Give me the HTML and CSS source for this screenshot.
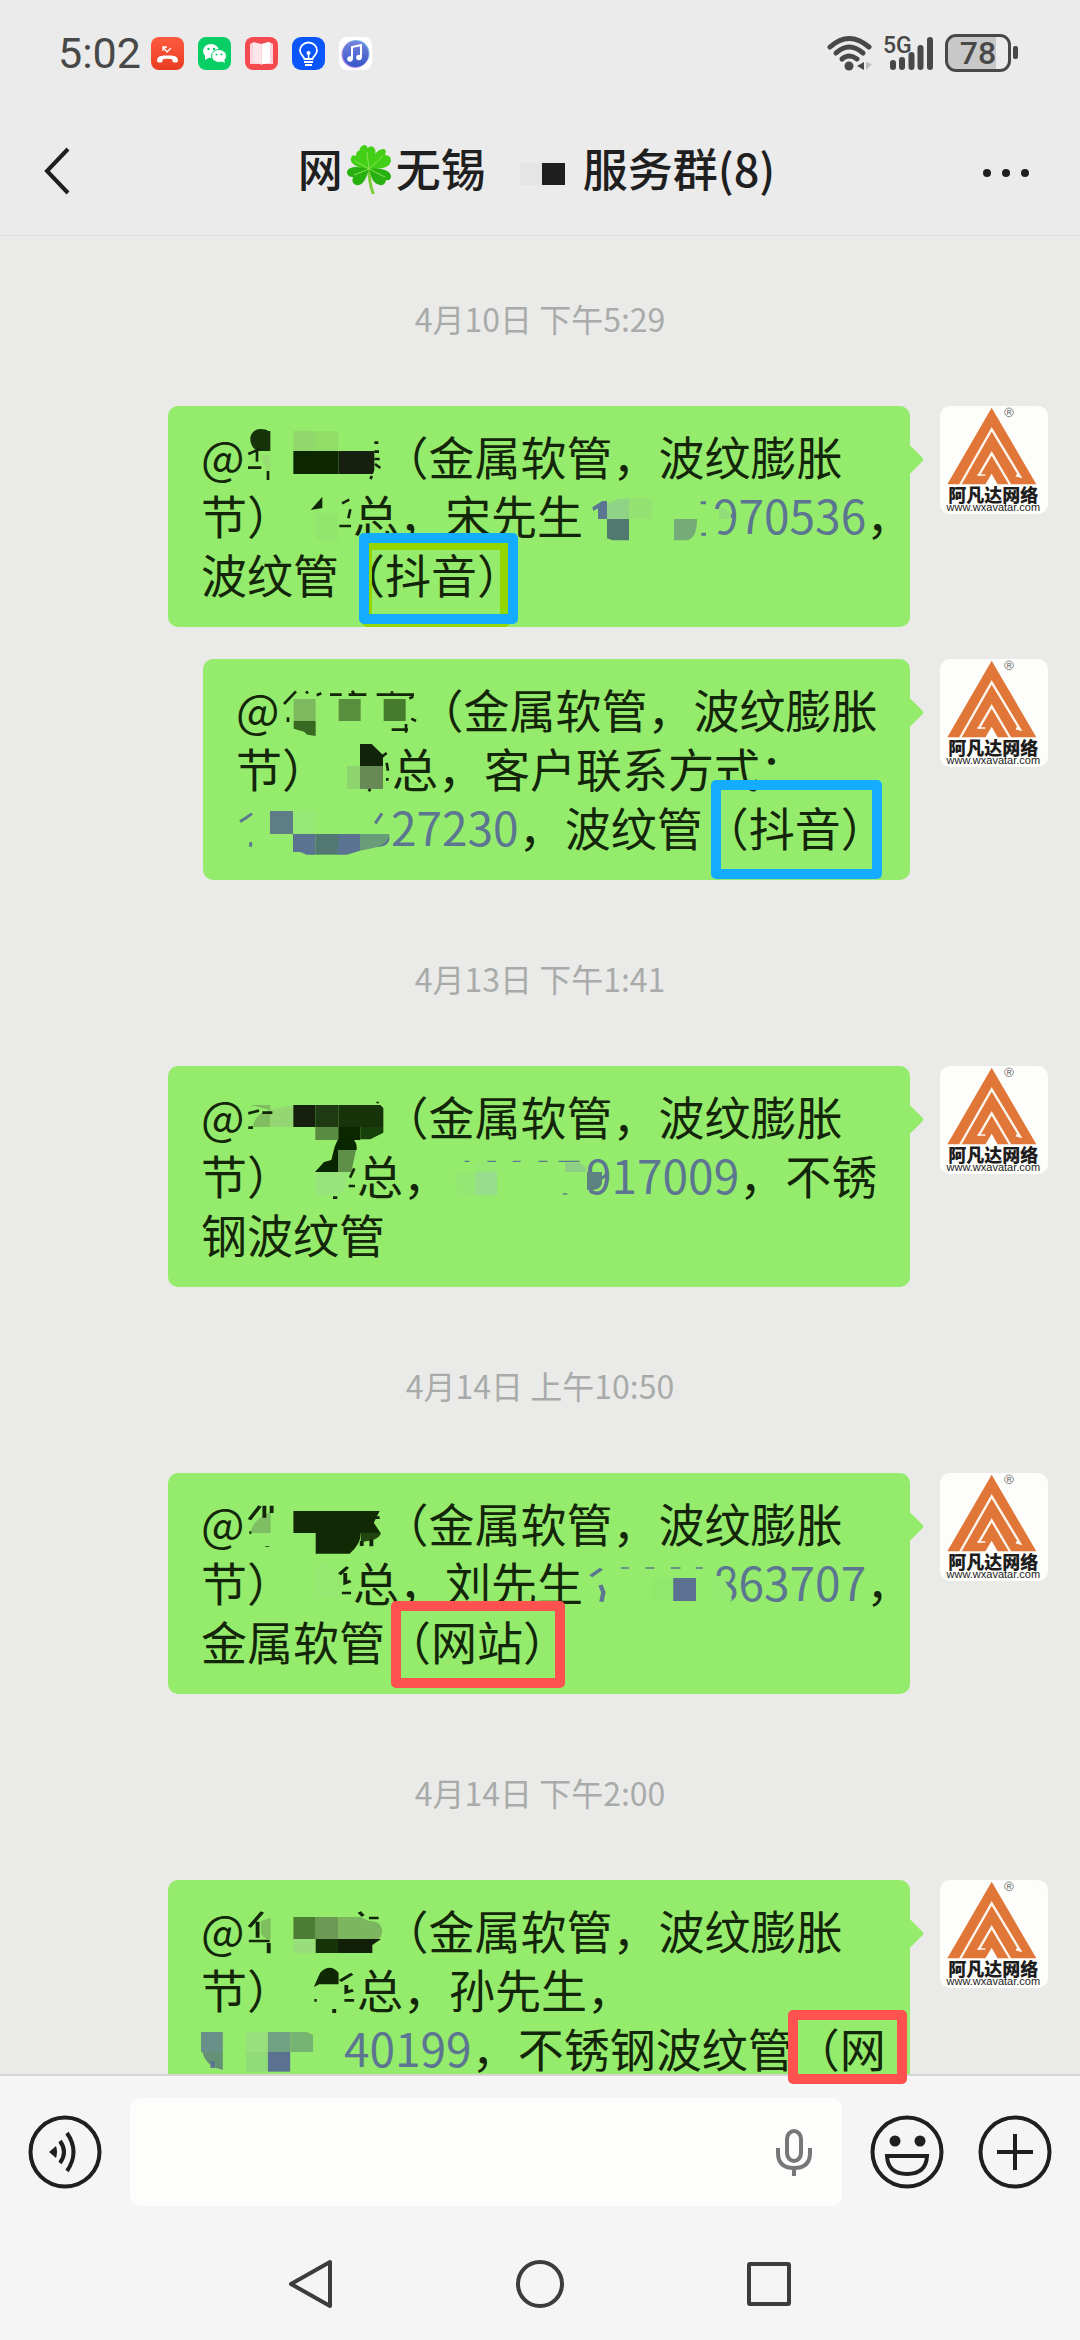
FILE: index.html
```html
<!DOCTYPE html>
<html lang="zh-CN">
<head>
    <meta charset="UTF-8">
    <meta name="viewport" content="width=device-width, initial-scale=1.0">
    <title>服务群(8)</title>
    <link rel="stylesheet" href="styles.css">
</head>
<body>
    <svg class="defs" aria-hidden="true">
        <symbol id="logo" viewBox="0 0 324 324">
            <rect width="324" height="324" fill="#fdfefb"/>
            <path d="M155 5 L289 235 H22 Z" fill="#e07738"/>
            <path d="M60 237 L155 70 L240 211 L228 208" fill="none" stroke="#fdf6ee" stroke-width="7"/>
            <path d="M116 209 L155 142 L211 237" fill="none" stroke="#fdf6ee" stroke-width="7"/>
            <path d="M112 207 H127 M119 207 L136 207" fill="none" stroke="#fdf6ee" stroke-width="5"/>
            <path d="M135 237 L155 203 L174 237 Z" fill="#fdfefb"/>
            <circle cx="207" cy="19" r="13" fill="none" stroke="#555" stroke-width="2"/>
            <text x="200" y="27" class="logo-r">R</text>
            <text x="160" y="288" class="logo-name">阿凡达网络</text>
            <text x="160" y="315" class="logo-url">www.wxavatar.com</text>
        </symbol>
    </svg>

    <div class="status">
        <span class="clock">5:02</span>
        <div class="apps">
            <svg class="app" viewBox="0 0 33 33">
                <defs><linearGradient id="red" x2="0" y2="1"><stop stop-color="#ff5a40"/><stop offset="1" stop-color="#e93d21"/></linearGradient></defs>
                <rect width="33" height="33" rx="8" fill="url(#red)"/>
                <path d="M6 24 C6 18 12 18.500 16.500 18.500 S27 18 27 24 C27 26 22 26 21.500 24.500 V22.500 C19 21.500 14 21.500 11.500 22.500 V24.500 C11 26 6 26 6 24 Z" fill="#fff"/>
                <path d="M12 14 V10 H16 M12 10 L16 15 L20 11" fill="none" stroke="#fff" stroke-width="1.300"/>
            </svg>
            <svg class="app" viewBox="0 0 33 33">
                <rect width="33" height="33" rx="8" fill="#07cf65"/>
                <ellipse cx="13" cy="14" rx="8" ry="7" fill="#fff"/>
                <path d="M7 18 L7 23 L12 20 Z" fill="#fff"/>
                <ellipse cx="21" cy="19" rx="7.500" ry="6.500" fill="#fff" stroke="#07cf65"/>
                <path d="M23 24 L27 26 L26 22 Z" fill="#fff"/>
                <circle cx="10.500" cy="12" r="1.200" fill="#07cf65"/><circle cx="16" cy="12" r="1.200" fill="#07cf65"/>
                <circle cx="18.500" cy="17.500" r="1" fill="#07cf65"/><circle cx="23.500" cy="17.500" r="1" fill="#07cf65"/>
            </svg>
            <svg class="app" viewBox="0 0 33 33">
                <rect width="33" height="33" rx="8" fill="#f4494f"/>
                <path d="M5 7 L9 5 L16 7 L24 5 L28 7 V27 H18 L16.500 28 L15 27 H5 Z" fill="#fbd3dc"/>
                <path d="M17 7 L24 5 L25 6 V26 L17 27 Z" fill="#fff"/>
                <path d="M8 6 L16 7 V27 L8 25 Z" fill="#fde6ea"/>
            </svg>
            <svg class="app" viewBox="0 0 33 33">
                <rect width="33" height="33" rx="9" fill="#0a56fa"/>
                <path d="M12.500 22 C12 19 8 18 8 13.500 A8.500 8 0 0 1 25 13.500 C25 18 21 19 20.500 22 Z" fill="none" stroke="#fff" stroke-width="1.800"/>
                <path d="M12 25 H21 M13 28 H20" stroke="#fff" stroke-width="2"/>
                <path d="M16.500 22 V17" stroke="#fff" stroke-width="1.500"/><circle cx="16.500" cy="16" r="2" fill="#fff"/>
            </svg>
            <svg class="app" viewBox="0 0 33 33">
                <defs><linearGradient id="tune" x2="0" y2="1"><stop stop-color="#7583dc"/><stop offset="1" stop-color="#3557c9"/></linearGradient></defs>
                <rect width="33" height="33" rx="8" fill="#fff"/>
                <circle cx="17" cy="16.500" r="13.500" fill="#6bb7ef"/>
                <circle cx="16" cy="17.500" r="13.500" fill="#c58de8"/>
                <circle cx="16.500" cy="17" r="13" fill="url(#tune)"/>
                <path d="M13 22 V10 L22 8 V20" fill="none" stroke="#fff" stroke-width="2"/>
                <circle cx="11" cy="22" r="2.800" fill="#fff"/><circle cx="20" cy="20.500" r="2.800" fill="#fff"/>
            </svg>
        </div>
        <div class="signals">
            <svg class="wifi" width="46" height="36" viewBox="0 0 46 36">
                <g fill="none" stroke="#484848" stroke-width="5" stroke-linecap="round">
                    <path d="M3 12 Q22 -5 42 12"/><path d="M9 18 Q22 6 36 18"/><path d="M15 24 Q22 18 30 24"/>
                </g>
                <circle cx="22" cy="31" r="4.500" fill="#484848"/>
                <path d="M37 27 V35 L30 31 Z" fill="#484848"/><path d="M39 27 V35 L45 29 Z" fill="#bbb"/>
            </svg>
            <svg class="cell" width="52" height="36" viewBox="0 0 52 36">
                <text x="0" y="18" class="net">5G</text>
                <path d="M10 28 V32 M19 25 V32 M28.500 20 V32 M37.500 13 V32 M47 5 V32" stroke="#484848" stroke-width="6" stroke-linecap="round"/>
            </svg>
            <div class="battery"><span>78</span></div>
        </div>
    </div>

    <header class="topbar">
        <button class="back" aria-label="返回">
            <svg width="28" height="50" viewBox="0 0 28 50"><path d="M25 3 L4 25 L25 47" fill="none" stroke="#1f1f1f" stroke-width="4"/></svg>
        </button>
        <h1>网<svg class="clover" width="45" height="50" viewBox="0 0 45 50">
                <path d="M22 25 Q22 38 26 49" fill="none" stroke="#7ccc3a" stroke-width="3" stroke-linecap="round"/>
                <g fill="#43cf15">
                    <path d="M22 25 C10 14 10 3 17 1 Q20 1 20.500 4 Q25 0 28 5 C30 11 25 20 22 25Z"/>
                    <path d="M22 25 C24 13 31 4 37 5 Q40 6 38 11 Q44 11 44 17 C42 25 32 25 22 25Z"/>
                    <path d="M22 25 C13 25 2 20 4 14 Q5 10 9 12 Q9 6 14 7 C19 9 21 16 22 25Z"/>
                </g>
                <g fill="#27b010">
                    <path d="M22 25 C32 23 45 26 44 33 Q43 37 39 36 Q38 42 33 41 C26 40 24 33 22 25Z"/>
                    <path d="M22 25 C12 22 1 22 0 28 Q0 33 6 33 Q4 39 9 41 C16 43 20 33 22 25Z"/>
                </g>
                <path d="M22 25 L20 8 M22 25 L36 12 M22 25 L8 17 M22 25 L38 33 M22 25 L7 31" stroke="#8ce255" stroke-width="1"/>
            </svg>无锡<svg class="hidden-name" width="97" height="24" viewBox="0 0 97 24"><path d="M34 0 H56 V22 H34Z" fill="#e5e5e5"/><path d="M56 0 H79 V22 H56Z" fill="#1f1f1f"/></svg>服务群(8)</h1>
        <button class="more" aria-label="更多">
            <svg width="48" height="16" viewBox="0 0 48 16"><g fill="#1f1f1f"><circle cx="5" cy="10" r="4"/><circle cx="24" cy="10" r="4"/><circle cx="43" cy="10" r="4"/></g></svg>
        </button>
    </header>

    <main class="chat">
        <time class="when">4月10日 下午5:29</time>
        <div class="row">
            <div class="bubble">
                @<svg class="mosaic" width="138" height="59" viewBox="254 108 414 177">
                    <path d="M330 123 V183 H300 C282 183 270 165 270 147 C270 130 284 117 300 117 Q318 117 324 123 Z" fill="#17330a"/>
                    <path d="M300 195 H330 V240 H318 Z" fill="#97dd72"/>
                    <path d="M264 192 L300 176 M290 182 V215 M263 233 H303 M323 243 V270" class="ink"/>
                    <path d="M399 123 H466 V183 H399Z" fill="#92d86d"/><path d="M466 123 H534 V183 H466Z" fill="#91dd68"/>
                    <path d="M399 183 H534 V252 H399Z" fill="#0c2700"/><path d="M534 183 H642 V240 L638 252 H534Z" fill="#171f0f"/>
                    <path d="M642 158 H654 M642 185 H656 M642 207 H658 M644 222 L660 234 M630 267 L635 258" class="ink"/>
                </svg>（金属软管，波纹膨胀<br>
                节）<svg class="mosaic" width="60" height="59" viewBox="399 285 180 177">
                    <path d="M452 360 L487 320 V354 Z" fill="#14260a"/><path d="M466 370 H534 V450 H466Z" fill="#93e66d"/>
                    <path d="M546 340 L568 329 M571 358 L565 385 M538 408 H573" class="ink"/>
                </svg>总，宋先生<a href="#" class="phone"><svg class="mosaic" width="130" height="59" viewBox="72 285 390 177">
                    <path d="M100 352 L130 333 H144 V387 H117 V355 L103 363 Z" fill="#5c7691"/>
                    <path d="M144 387 H210 V451 H160 L144 445 Z" fill="#527970"/>
                    <path d="M144 342 L180 326 H210 V387 H144Z" fill="#8fd386"/><path d="M210 324 H280 V387 H210Z" fill="#94e272"/>
                    <path d="M345 387 H414 Q414 451 378 451 H345Z" fill="#74ab78"/>
                    <path d="M425 338 H441 M427 433 H441" class="tel-ink"/>
                    <path d="M466 357 H500 L519 390 L480 424 L466 450 Z" fill="#95ec6c"/><path d="M480 352 Q512 352 518 387 H480 Z" fill="#92dd78"/>
                </svg>970536</a>，<br>
                波纹管（抖音）
                <i class="frame frame-olive"></i>
                <i class="frame frame-blue frame-a"></i>
            </div>
            <svg class="avatar"><use href="#logo"/></svg>
        </div>
        <div class="row">
            <div class="bubble bubble-narrow">
                @<svg class="mosaic" width="138" height="59" viewBox="268 117 414 177">
                    <path d="M280 192 L316 154 M292 232 V246 M346 154 L352 160 M378 166 L392 160 M418 164 H453 M474 164 H527 M484 152 L492 164 M558 164 H670 M604 154 V164 M603 269 H652 M646 252 V278 M662 236 L676 243 M656 176 L668 169" class="ink"/>
                    <path d="M309 177 H375 V243 H309Z" fill="#7db95e"/><path d="M309 243 H375 V288 L350 284 L340 275 L309 266Z" fill="#376a20"/>
                    <path d="M444 177 H510 V243 H444Z" fill="#588f3e"/><path d="M579 177 H645 V243 H579Z" fill="#467b2d"/>
                </svg>（金属软管，波纹膨胀<br>
                节）<svg class="mosaic" width="64" height="59" viewBox="414 294 192 177">
                    <path d="M510 312 H545 L579 345 V378 H510Z" fill="#112409"/>
                    <path d="M471 378 H510 V447 H471Z" fill="#8dd46f"/><path d="M510 378 H579 V447 H510Z" fill="#678956"/>
                    <path d="M576 350 L590 339 M590 368 L594 392 M588 418 H596 M536 454 L541 447" class="ink"/>
                </svg>总，客户联系方式：<br>
                <a href="#" class="phone"><svg class="mosaic" width="155" height="59" viewBox="138 471 465 177">
                    <path d="M150 545 Q166 536 186 521 M182 607 V620 M556 550 L576 520 M556 616 Q596 618 594 590" class="tel-ink"/>
                    <path d="M240 513 H309 V582 H240Z" fill="#5e7d86"/><path d="M309 513 H376 V582 H309Z" fill="#95e776"/>
                    <path d="M309 582 H376 V644 H350 L330 636 H309Z" fill="#5a7390"/><path d="M376 582 H444 V644 H376Z" fill="#527872"/>
                    <path d="M444 582 H510 V632 L470 644 H444Z" fill="#5a7390"/><path d="M510 582 H598 Q596 612 550 624 L510 632Z" fill="#699c78"/>
                </svg>27230</a>，波纹管（抖音）
                <i class="frame frame-blue frame-b"></i>
            </div>
            <svg class="avatar"><use href="#logo"/></svg>
        </div>

        <time class="when">4月13日 下午1:41</time>
        <div class="row">
            <div class="bubble">
                @<svg class="mosaic" width="138" height="59" viewBox="254 108 414 177">
                    <path d="M268 165 H330 V231 H278 Q282 190 330 180 Z" fill="#7fbd60"/><path d="M330 178 L399 165 V231 H330Z" fill="#93d672"/>
                    <path d="M264 190 L296 182 M306 188 H336 M264 233 H278 M652 155 V160" class="ink"/>
                    <path d="M399 165 H465 V231 H399Z" fill="#151f0c"/><path d="M465 165 H534 V231 H465Z" fill="#1e3a12"/>
                    <path d="M534 165 H660 L669 174 V231 H534Z" fill="#173309"/><path d="M465 231 H534 V270 H465Z" fill="#598b40"/>
                    <path d="M534 231 H600 V270 H534Z" fill="#0a2700"/><path d="M600 231 H669 V248 L630 268 H600Z" fill="#17400a"/>
                </svg>（金属软管，波纹膨胀<br>
                节）<svg class="mosaic" width="64" height="59" viewBox="399 285 192 177">
                    <path d="M534 268 H580 Q592 280 590 300 H534 V366 H465 L492 336 L514 330 L524 290 Z" fill="#0a2600"/>
                    <path d="M534 300 H588 L574 366 H534Z" fill="#609048"/><path d="M466 366 H564 Q564 436 520 436 H466Z" fill="#97e57a"/>
                    <path d="M570 383 L583 355 M566 408 H585 M519 443 H532" class="ink"/>
                </svg>总，<a href="#" class="phone"><svg class="mosaic" width="137" height="59" viewBox="861 285 411 177">
                    <path d="M908 334 H922 M976 334 H1002 M1052 334 H1076 M1130 334 H1156 M1190 334 H1253" class="tel-thin"/>
                    <path d="M872 366 H940 V435 H890 Z" fill="#95e672"/><path d="M940 338 H1005 V366 H940Z" fill="#95e874"/>
                    <path d="M940 366 H1005 V435 H940Z" fill="#98dd8d"/><path d="M1209 338 H1250 Q1270 345 1275 366 H1209Z" fill="#8dcf85"/>
                    <path d="M1275 366 H1320 V400 Q1316 420 1290 420 H1275Z" fill="#5d827f"/><path d="M1202 432 H1216" class="tel-thin"/>
                </svg>917009</a>，不锈<br>
                钢波纹管
            </div>
            <svg class="avatar"><use href="#logo"/></svg>
        </div>

        <time class="when">4月14日 上午10:50</time>
        <div class="row">
            <div class="bubble">
                @<svg class="mosaic" width="138" height="59" viewBox="174 96 285 177" preserveAspectRatio="none">
                    <path d="M227 152 V216 H185 Q190 175 227 152Z" fill="#7fbf63"/>
                    <path d="M183 176 L205 135 M214 170 V134 M229 134 V156 M183 215 H187 M220 256 V258" class="ink"/>
                    <path d="M274 150 H452 L440 185 L454 216 H413 Q413 250 390 278 H320 V216 H274Z" fill="#112904"/>
                    <path d="M413 216 H455 Q450 240 413 242Z" fill="#22450f"/><path d="M415 240 V255 M435 235 V256 M440 170 H452" class="ink"/>
                </svg>（金属软管，波纹膨胀<br>
                节）<svg class="mosaic" width="60" height="59" viewBox="274 273 124 177" preserveAspectRatio="none">
                    <path d="M320 310 H350 L372 350 V410 H320Z" fill="#96e970"/>
                    <path d="M370 340 L387 318 M382 336 V366 L393 360 M375 396 H394" class="ink"/>
                </svg>总，刘先生<a href="#" class="phone"><svg class="mosaic" width="130" height="59" viewBox="877 273 268 177" preserveAspectRatio="none">
                    <path d="M893 346 L915 323 M913 372 L919 394 L915 422" class="tel-ink"/>
                    <path d="M955 321 H972 M1006 321 H1024 M1058 321 H1078 M1110 321 H1124" class="tel-thin"/>
                    <path d="M1018 351 H1063 V420 H1018Z" fill="#92e76d"/><path d="M1063 351 H1110 V420 H1063Z" fill="#5c7191"/>
                    <path d="M1140 345 H1162 Q1178 370 1184 415 L1176 430 H1140 Z" fill="#95ea70"/>
                </svg>863707</a>，<br>
                金属软管（网站）
                <i class="frame frame-red frame-c"></i>
            </div>
            <svg class="avatar"><use href="#logo"/></svg>
        </div>

        <time class="when">4月14日 下午2:00</time>
        <div class="row">
            <div class="bubble">
                @<svg class="mosaic" width="138" height="59" viewBox="174 117 285 177" preserveAspectRatio="none">
                    <path d="M207 180 L227 170 V235 H218 L207 220Z" fill="#7fbf5f"/>
                    <path d="M183 198 L210 153 M200 182 V230 M182 240 H225 M223 246 V277 M410 153 L418 165 M430 171 H450" class="ink"/>
                    <path d="M274 168 H320 V234 H274Z" fill="#4d7d35"/><path d="M320 168 H366 V234 H320Z" fill="#6c9a54"/>
                    <path d="M366 168 H413 L430 180 Q457 180 457 210 Q457 225 450 234 H366Z" fill="#7cb65f"/>
                    <path d="M274 234 H320 V276 H274Z" fill="#98df7c"/><path d="M320 234 H366 V276 H320Z" fill="#153509"/>
                    <path d="M366 234 H455 L437 252 V276 H366Z" fill="#12200a"/>
                </svg>（金属软管，波纹膨胀<br>
                节）<svg class="mosaic" width="64" height="59" viewBox="274 294 132 177" preserveAspectRatio="none">
                    <path d="M317 378 L330 335 Q350 305 368 335 V370 H328 Z" fill="#102803"/>
                    <path d="M371 360 L396 338 M384 372 V394 L398 388 M380 418 H400 M318 418 H323 M359 444 V456" class="ink"/>
                </svg>总，孙先生，<br>
                <a href="#" class="phone"><svg class="mosaic" width="143" height="59" viewBox="89 471 295 177" preserveAspectRatio="none">
                    <path d="M89 513 H134 V573 H89Z" fill="#698f89"/><path d="M92 573 H134 V627 Q98 615 92 573Z" fill="#659174"/><path d="M113 600 V621" class="tel-ink"/>
                    <path d="M182 513 H227 V573 H182Z" fill="#97e07d"/><path d="M227 513 H273 V573 H227Z" fill="#71a183"/><path d="M273 513 H308 L320 522 V573 H273Z" fill="#76b471"/>
                    <path d="M182 573 H227 V632 H182Z" fill="#90dc78"/><path d="M227 573 H273 V632 H227Z" fill="#5a7190"/>
                </svg>40199</a>，不锈钢波纹管（网
                <i class="frame frame-red frame-d"></i>
            </div>
            <svg class="avatar"><use href="#logo"/></svg>
        </div>
    </main>

    <footer class="bottom">
        <form class="composer">
            <button type="button" aria-label="语音">
                <svg width="74" height="74" viewBox="0 0 74 74"><circle cx="37" cy="37" r="34.500" class="line"/><path d="M21 37 L28 31 Q30 37 28 43 Z" fill="#1f1f1f"/><path d="M32 26 Q40 37 32 48 M39 18 Q52 37 39 56" class="line"/></svg>
            </button>
            <div class="field">
                <input type="text" aria-label="消息">
                <svg width="38" height="50" viewBox="0 0 38 50"><path d="M12 12 A7 8 0 0 1 26 12 V26 A7 8 0 0 1 12 26 Z M3 21 V26 Q3 41 19 41 T35 26 V21 M19 41 V49" fill="none" stroke="#777" stroke-width="4"/></svg>
            </div>
            <button type="button" aria-label="表情">
                <svg width="74" height="74" viewBox="0 0 74 74"><circle cx="37" cy="37" r="34.500" class="line"/><circle cx="25" cy="26" r="5.500" fill="#1f1f1f"/><circle cx="50" cy="26" r="5.500" fill="#1f1f1f"/><path d="M17 41 H57 Q56 59 37 59 T17 41 Z" class="line"/></svg>
            </button>
            <button type="button" aria-label="添加">
                <svg width="74" height="74" viewBox="0 0 74 74"><circle cx="37" cy="37" r="34.500" class="line"/><path d="M19 37 H55 M37 19 V55" class="line"/></svg>
            </button>
        </form>
        <nav class="keys">
            <button aria-label="后退"><svg width="48" height="50" viewBox="0 0 48 50"><path d="M43 3 V47 L4 25 Z" class="key"/></svg></button>
            <button aria-label="主页"><svg width="48" height="50" viewBox="0 0 48 50"><circle cx="24" cy="25" r="22" class="key"/></svg></button>
            <button aria-label="最近任务"><svg width="48" height="50" viewBox="0 0 48 50"><rect x="4" y="5" width="40" height="40" rx="1" class="key"/></svg></button>
        </nav>
    </footer>
</body>
</html>
```
FILE: styles.css
```css
* {
    box-sizing: border-box;
}
body {
    margin: 0;
    height: 100vh;
    display: flex;
    flex-direction: column;
    overflow: hidden;
    background-color: #ebebeb;
    color: #1f1f1f;
    font-family: "Noto Sans CJK SC", sans-serif;
}
button {
    padding: 0;
    border: none;
    background: none;
    display: flex;
    align-items: center;
}
svg {
    flex: none;
}
.defs {
    position: absolute;
    width: 0;
    height: 0;
}

/* status bar */
.status {
    height: 106px;
    padding: 0 66px 0 58px;
    display: flex;
    align-items: center;
    color: #484848;
}
.clock {
    font-family: Roboto, sans-serif;
    font-size: 43px;
}
.apps {
    display: flex;
    gap: 14px;
    margin-left: 10px;
}
.app {
    width: 33px;
    height: 33px;
}
.signals {
    margin-left: auto;
    display: flex;
    align-items: center;
    gap: 10px;
}
.net {
    font: 500 23px Roboto, sans-serif;
    fill: #484848;
}
.battery {
    position: relative;
    width: 66px;
    height: 38px;
    margin-right: 3px;
    border: 3px solid #484848;
    border-radius: 11px;
    background: linear-gradient(to right, #c8c8c8 80%, transparent 80%);
    text-align: center;
    font: 500 32px/32px Roboto, sans-serif;
}
.battery::after {
    content: "";
    position: absolute;
    right: -10px;
    top: 9px;
    width: 5px;
    height: 13px;
    border-radius: 2px;
    background-color: #484848;
}

/* title bar */
.topbar {
    height: 130px;
    padding: 0 50px 0 43px;
    display: grid;
    grid-template-columns: 1fr auto 1fr;
    align-items: center;
    border-bottom: 1px solid #dfdfdf;
}
.topbar h1 {
    margin: 0;
    padding-bottom: 6px;
    font-size: 45px;
    font-weight: 500;
    line-height: 60px;
    white-space: nowrap;
}
.clover {
    margin: 0 4px;
    vertical-align: -7px;
}
.more {
    justify-self: end;
}

/* messages */
.chat {
    flex: 1;
    min-height: 0;
    padding-top: 58px;
    background-color: #eaebe9;
}
.when {
    display: block;
    margin: 74px 0 64px;
    color: #a9abaa;
    font-size: 32px;
    line-height: 48px;
    text-align: center;
}
.when:first-child {
    margin-top: 0;
}
.row {
    display: flex;
    justify-content: flex-end;
    align-items: flex-start;
    gap: 30px;
    padding: 0 32px 0 168px;
}
.row + .row {
    margin-top: 32px;
}
.bubble {
    position: relative;
    min-width: 0;
    padding: 20px 33px 24px;
    border-radius: 10px;
    background-color: #95ec6c;
    color: #14260a;
    font-size: 46px;
    line-height: 59px;
    white-space: nowrap;
}
.bubble-narrow {
    max-width: 707px;
}
.bubble::before {
    content: "";
    position: absolute;
    top: 43px;
    right: -10px;
    width: 21px;
    height: 21px;
    border-radius: 3px;
    background-color: #95ec6c;
    transform: rotate(45deg);
}
.phone {
    color: #5c7691;
    text-decoration: none;
}
.mosaic {
    position: relative;
    overflow: visible;
    vertical-align: top;
}
.ink {
    fill: none;
    stroke: #14260a;
    stroke-width: 8;
}
.tel-ink {
    fill: none;
    stroke: #5c7691;
    stroke-width: 9;
}
.tel-thin {
    stroke: #5c7691;
    stroke-width: 4;
}
.avatar {
    width: 108px;
    height: 108px;
    border-radius: 10px;
}
.logo-r {
    font: 20px "Liberation Sans", sans-serif;
    fill: #444;
}
.logo-name {
    font: 900 54px "Noto Sans CJK SC", sans-serif;
    fill: #1d1d1d;
    text-anchor: middle;
}
.logo-url {
    font: 33px "Liberation Sans", sans-serif;
    fill: #222;
    text-anchor: middle;
}

/* marker boxes drawn over the messages */
.frame {
    position: absolute;
    z-index: 2;
    border: 10px solid;
    border-radius: 5px;
}
.frame-blue {
    border-color: #14acff;
}
.frame-red {
    border-color: #ff5150;
}
.frame-olive {
    left: 194px;
    top: 134px;
    width: 148px;
    height: 87px;
    border-color: #93d600;
}
.frame-a {
    left: 191px;
    top: 127px;
    width: 159px;
    height: 91px;
}
.frame-b {
    right: 28px;
    top: 121px;
    width: 171px;
    height: 99px;
}
.frame-c {
    left: 223px;
    top: 128px;
    width: 174px;
    height: 87px;
}
.frame-d {
    right: 3px;
    top: 130px;
    width: 119px;
    height: 74px;
}

/* input bar and system keys */
.bottom {
    position: relative;
    z-index: 1;
    border-top: 2px solid #d5d6d4;
    background-color: #f5f5f5;
}
.composer {
    display: flex;
    align-items: center;
    padding: 22px 28px;
}
.field {
    flex: 1;
    display: flex;
    align-items: center;
    height: 108px;
    margin: 0 28px;
    padding: 0 29px;
    border-radius: 10px;
    background-color: #fdfefc;
}
.field input {
    flex: 1;
    min-width: 0;
    height: 100%;
    border: none;
    outline: none;
    background: none;
    font-size: 46px;
}
.composer button + button {
    margin-left: 34px;
}
.line {
    fill: none;
    stroke: #1f1f1f;
    stroke-width: 4;
}
.keys {
    height: 112px;
    display: flex;
    justify-content: center;
    align-items: center;
    gap: 181px;
}
.key {
    fill: none;
    stroke: #3c3c3c;
    stroke-width: 4;
    stroke-linejoin: round;
}
```
